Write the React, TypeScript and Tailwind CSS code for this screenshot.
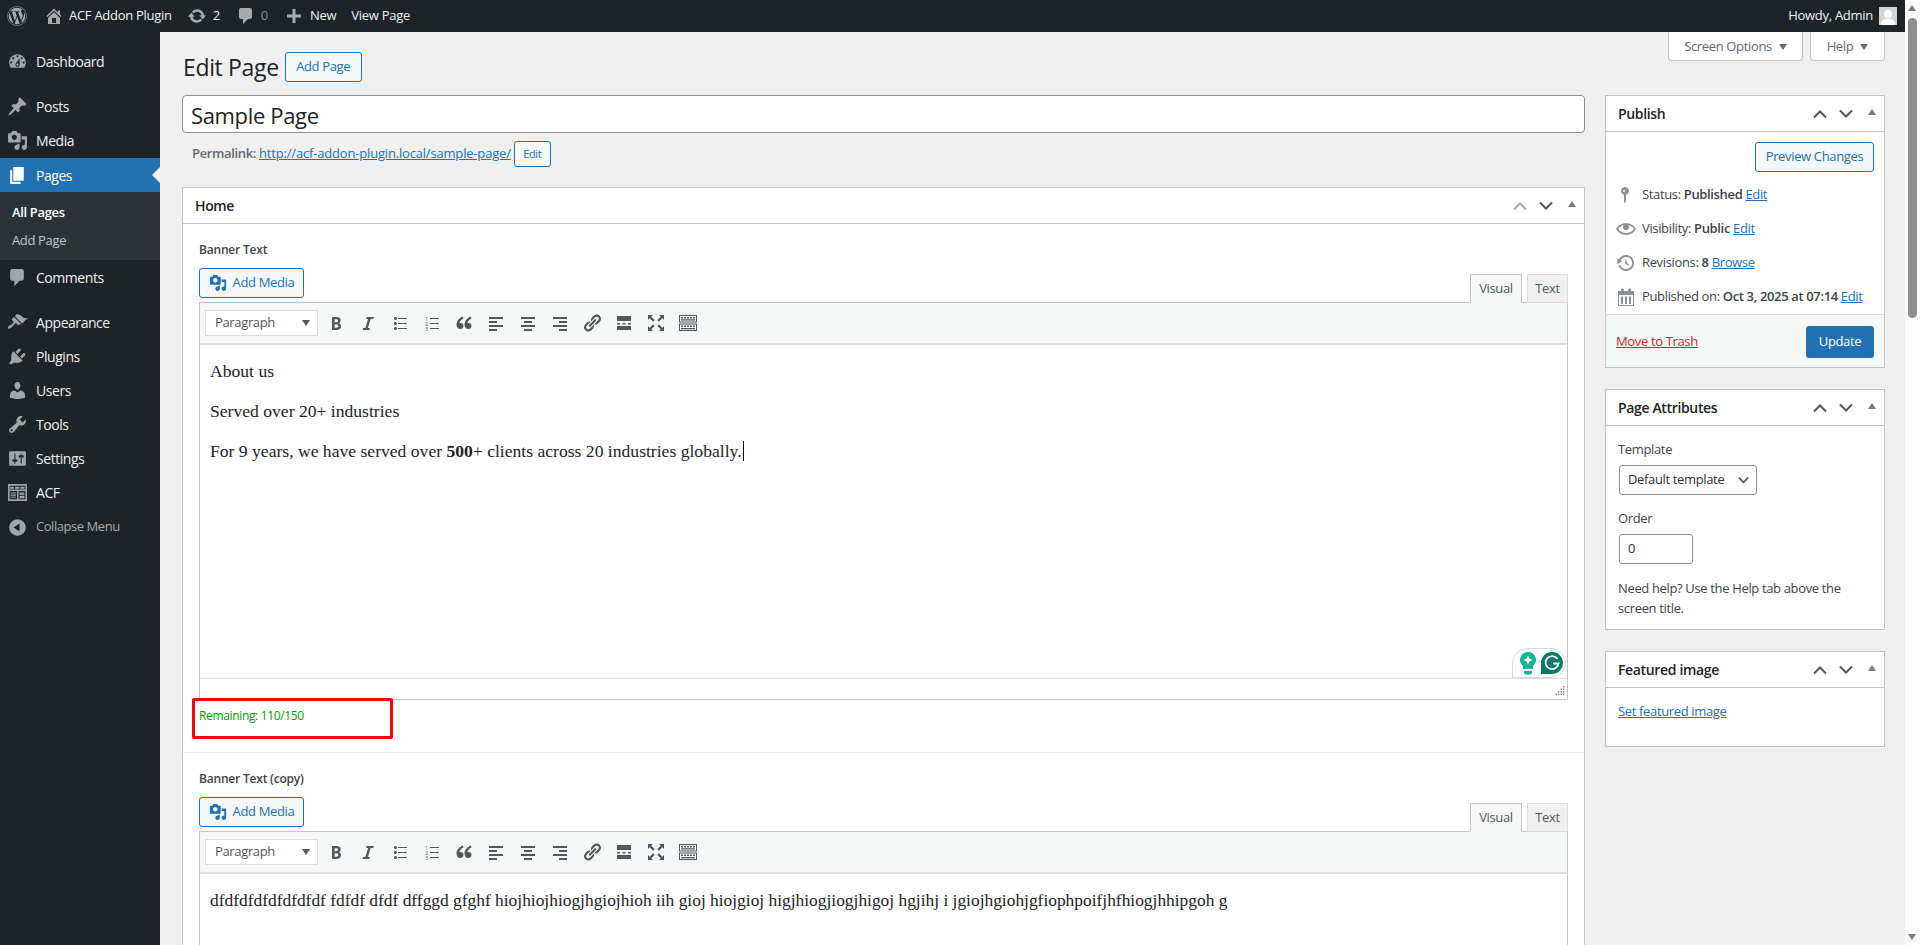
import React from "react";
import { FaWordpress } from "react-icons/fa";

const P = {
  update: "M10.2 3.28c3.53 0 6.43 2.61 6.92 6h2.08l-3.5 4-3.5-4h2.32c-.45-1.97-2.21-3.45-4.32-3.45-1.45 0-2.73.71-3.54 1.78L4.95 5.66C6.23 4.2 8.11 3.28 10.2 3.28zm-.4 13.44c-3.52 0-6.43-2.61-6.92-6H.8l3.5-4c1.17 1.33 2.33 2.67 3.5 4H5.48c.45 1.97 2.21 3.45 4.32 3.45 1.45 0 2.73-.71 3.54-1.78l1.71 1.95c-1.28 1.46-3.15 2.38-5.25 2.38z",
  home: "M16 8.5l1.53 1.53-1.06 1.06L10 4.62l-6.47 6.47-1.06-1.06L10 2.5l4 4v-2h2v4zm-6-2.46l6 5.99V18H4v-5.97zM12 17v-5H8v5h4z",
  dashboard: "M3.76 16h12.48c1.1-1.37 1.76-3.11 1.76-5 0-4.42-3.58-8-8-8s-8 3.58-8 8c0 1.89.66 3.63 1.76 5zM10 4c.55 0 1 .45 1 1s-.45 1-1 1-1-.45-1-1 .45-1 1-1zM6 6c.55 0 1 .45 1 1s-.45 1-1 1-1-.45-1-1 .45-1 1-1zm8 0c.55 0 1 .45 1 1s-.45 1-1 1-1-.45-1-1 .45-1 1-1zm-5.37 5.55L12 7v6c0 1.1-.9 2-2 2s-2-.9-2-2c0-.57.24-1.08.63-1.45zM4 10c.55 0 1 .45 1 1s-.45 1-1 1-1-.45-1-1 .45-1 1-1zm12 0c.55 0 1 .45 1 1s-.45 1-1 1-1-.45-1-1 .45-1 1-1zm-5 3c0-.55-.45-1-1-1s-1 .45-1 1 .45 1 1 1 1-.45 1-1z",
  post: "M10.44 3.02l1.82-1.82 6.36 6.35-1.83 1.82c-1.05-.68-2.48-.57-3.41.36l-.75.75c-.92.93-1.04 2.35-.35 3.41l-1.83 1.82-2.41-2.41-2.8 2.79c-.42.42-3.38 2.71-3.8 2.29s1.86-3.39 2.28-3.81l2.79-2.79L4.1 9.36l1.83-1.82c1.05.69 2.48.57 3.4-.36l.75-.75c.93-.92 1.05-2.35.36-3.41z",
  media: "M13 11V4c0-.55-.45-1-1-1h-1.67L9 1H5L3.67 3H2c-.55 0-1 .45-1 1v7c0 .55.45 1 1 1h10c.55 0 1-.45 1-1zM7 4.5c1.38 0 2.5 1.12 2.5 2.5S8.38 9.5 7 9.5 4.5 8.38 4.5 7 5.62 4.5 7 4.5zM14 6h5v10.5c0 1.38-1.12 2.5-2.5 2.5S14 17.88 14 16.5s1.12-2.5 2.5-2.5c.17 0 .34.02.5.05V9h-3V6zm-4 8.05V13h2v3.5c0 1.38-1.12 2.5-2.5 2.5S7 17.88 7 16.5 8.12 14 9.5 14c.17 0 .34.02.5.05z",
  page: "M6 15V2h10v13H6zm-1 1h8v2H3V5h2v11z",
  comment: "M5 2h9c1.1 0 2 .9 2 2v7c0 1.1-.9 2-2 2h-2l-5 5v-5H5c-1.1 0-2-.9-2-2V4c0-1.1.9-2 2-2z",
  appearance: "M14.48 11.06L7.41 3.99l1.5-1.5c.5-.56 2.3-.47 3.51.32 1.21.8 1.43 1.28 2.91 2.1 1.18.64 2.45 1.26 4.45.85zm-.71.71L6.7 4.7 4.93 6.47c-.39.39-.39 1.02 0 1.41l1.06 1.06c.39.39.39 1.03 0 1.42-.6.6-1.43 1.11-2.21 1.69-.35.26-.7.53-1.01.84C1.43 13.23.4 14.91 1.2 15.7c.79.8 2.48-.23 3.82-1.57.31-.31.58-.66.84-1.01.58-.78 1.09-1.61 1.69-2.21.39-.39 1.02-.39 1.41 0l1.06 1.06c.39.39 1.02.39 1.41 0z",
  plugin: "M13.11 4.36L9.87 7.6 8 5.73l3.24-3.24c.35-.34 1.05-.2 1.56.32.52.51.66 1.21.31 1.55zm-8 1.77l.91-1.12 9.01 9.01-1.19.84c-.71.71-2.63 1.16-3.82 1.16H6.14L4.9 17.26c-.59.59-1.54.59-2.12 0-.59-.58-.59-1.53 0-2.12l1.24-1.24v-3.88c0-1.13.4-3.19 1.09-3.89zm7.26 3.97l3.24-3.24c.34-.35 1.04-.21 1.55.31.52.51.66 1.21.31 1.55l-3.24 3.25z",
  users: "M10 9.25c-2.27 0-2.73-3.44-2.73-3.44C7 4.02 7.82 2 9.97 2c2.16 0 2.98 2.02 2.71 3.81 0 0-.41 3.44-2.68 3.44zm0 2.57L12.72 10c2.39 0 4.52 2.33 4.52 4.53v2.49s-3.65 1.13-7.24 1.13c-3.65 0-7.24-1.13-7.24-1.13v-2.49c0-2.25 1.94-4.48 4.47-4.48z",
  tools: "M16.68 9.77c-1.34 1.34-3.3 1.67-4.95.99l-5.41 6.52c-.99.99-2.59.99-3.58 0s-.99-2.59 0-3.57l6.52-5.42c-.68-1.65-.35-3.61.99-4.95 1.28-1.28 3.12-1.62 4.72-1.06l-2.89 2.89 2.82 2.82 2.86-2.87c.53 1.58.18 3.39-1.08 4.65zM3.81 16.21c.4.39 1.04.39 1.43 0 .4-.4.4-1.04 0-1.43-.39-.4-1.03-.4-1.43 0-.39.39-.39 1.03 0 1.43z",
  settings: "M18 16V4c0-.55-.45-1-1-1H3c-.55 0-1 .45-1 1v12c0 .55.45 1 1 1h14c.55 0 1-.45 1-1zM8 11h1c.55 0 1 .45 1 1s-.45 1-1 1H8v1.5c0 .28-.22.5-.5.5s-.5-.22-.5-.5V13H6c-.55 0-1-.45-1-1s.45-1 1-1h1V5.5c0-.28.22-.5.5-.5s.5.22.5.5V11zm5-2h-1c-.55 0-1-.45-1-1s.45-1 1-1h1V5.5c0-.28.22-.5.5-.5s.5.22.5.5V7h1c.55 0 1 .45 1 1s-.45 1-1 1h-1v5.5c0 .28-.22.5-.5.5s-.5-.22-.5-.5V9z",
  acf: "M1 2h18v16H1zM2.5 3.5v3.7h15V3.5zM3 4.5h3.5v2H3zm4.7 0h4v2h-4zm5 0h4v2h-4zM2.5 8.5v8h7v-8zm8.5 0v8h6.5v-8zM3.5 10h5v1h-5zm0 2h5v1h-5zm0 2h5v1h-5zM12 10h4.5v2.2H12zm0 3.2h4.5v2.3H12z",
  collapse: "M10 2.16c4.33 0 7.84 3.51 7.84 7.84s-3.51 7.84-7.84 7.84S2.16 14.33 2.16 10 5.71 2.16 10 2.16zm2 11.72V6.12L6.18 9.97z",
  pin: "M14 6c0 1.86-1.28 3.41-3 3.86V16c0 1-2 2-2 2V9.86C7.28 9.41 6 7.86 6 6c0-2.21 1.79-4 4-4s4 1.79 4 4zM8 6c0 .5.5 1 1 1s1-.5 1-1-.5-1-1-1-1 .5-1 1z",
  eye: "M19.7 9.4C17.7 6 14 3.9 10 3.9S2.3 6 .3 9.4L0 10l.3.6c2 3.4 5.7 5.5 9.7 5.5s7.7-2.1 9.7-5.5l.3-.6-.3-.6zM10 14.1c-3.1 0-6-1.6-7.7-4.1C3.6 8 5.7 6.6 8 6.1 7.3 6.7 7 7.4 7 8.2c0 1.7 1.3 3 3 3s3-1.3 3-3c0-.8-.3-1.5-.8-2.1 2.3.5 4.4 1.9 5.7 3.9-1.7 2.5-4.6 4.1-7.9 4.1z",
  backup: "M13.65 2.88c3.93 2.01 5.48 6.84 3.47 10.77s-6.83 5.48-10.77 3.47c-1.87-.96-3.2-2.56-3.86-4.4l1.64-1.03c.45 1.57 1.52 2.95 3.08 3.76 3.01 1.54 6.69.35 8.23-2.66 1.55-3.01.36-6.69-2.65-8.24C9.78 3.01 6.1 4.2 4.56 7.21l1.88.97-4.95 3.08-.39-5.82 1.78.91C4.9 2.4 9.75.89 13.65 2.88zm-4.36 7.83C9.11 10.53 9 10.28 9 10c0-.07.03-.12.04-.19h-.01L10 5l.97 4.81L14 13l-4.5-2.12.02-.02c-.08-.04-.16-.09-.23-.15z",
  calendar: "M15 4h3v15H2V4h3V3c0-.41.15-.76.44-1.06.29-.29.65-.44 1.06-.44s.77.15 1.06.44c.29.3.44.65.44 1.06v1h4V3c0-.41.15-.76.44-1.06.29-.29.65-.44 1.06-.44s.77.15 1.06.44c.29.3.44.65.44 1.06v1zM3 8v10h14V8zM5 9.5h2V17H5zm4 0h2V17H9zm4 0h2V17h-2z",
  bold: "M6 4v13h4.54c1.37 0 2.46-.33 3.26-1 .8-.66 1.2-1.58 1.2-2.77 0-.84-.17-1.51-.51-2.01s-.9-.85-1.69-1.04v-.06c.57-.1 1.02-.4 1.36-.9s.51-1.13.51-1.88c0-1.14-.39-1.98-1.17-2.5C12.72 4.26 11.5 4 9.84 4H6zm2.57 5.15V6.26h1.36c.73 0 1.27.11 1.61.32.34.22.51.58.51 1.07 0 .54-.16.92-.47 1.15s-.82.35-1.51.35h-1.5zm0 2.19h1.6c1.44 0 2.16.53 2.16 1.61 0 .6-.17 1.05-.51 1.34s-.86.44-1.57.44H8.57v-3.39z",
  italic: "M14.78 6h-2.13l-2.8 9h2.12l-.62 2H4.6l.62-2h2.14l2.8-9H8.03l.62-2h7.75z",
  ul: "M5.5 7C4.67 7 4 6.33 4 5.5 4 4.68 4.67 4 5.5 4 6.32 4 7 4.68 7 5.5 7 6.33 6.32 7 5.5 7zM8 5h9v1H8V5zm-2.5 7c-.83 0-1.5-.67-1.5-1.5C4 9.68 4.67 9 5.5 9c.82 0 1.5.68 1.5 1.5 0 .83-.68 1.5-1.5 1.5zM8 10h9v1H8v-1zm-2.5 7c-.83 0-1.5-.67-1.5-1.5 0-.82.67-1.5 1.5-1.5.82 0 1.5.68 1.5 1.5 0 .83-.68 1.5-1.5 1.5zM8 15h9v1H8v-1z",
  quote: "M9.5 13c0-1.7-1.3-3-3-3-.5 0-.9.1-1.1.2.4-2.3 2.6-4.2 4.3-5L8.6 3.6C5.8 4.9 2.5 7.7 2.5 11.7c0 2.6 1.6 4.3 3.7 4.3 1.9 0 3.3-1.3 3.3-3zm8 0c0-1.7-1.3-3-3-3-.5 0-.9.1-1.1.2.4-2.3 2.6-4.2 4.3-5l-1.1-1.6c-2.8 1.3-6.1 4.1-6.1 8.1 0 2.6 1.6 4.3 3.7 4.3 1.9 0 3.3-1.3 3.3-3z",
  alignLeft: "M3 4h14v2H3zM3 8h8v2H3zM3 12h14v2H3zM3 16h8v2H3z",
  alignCenter: "M3 4h14v2H3zM6 8h8v2H6zM3 12h14v2H3zM6 16h8v2H6z",
  alignRight: "M3 4h14v2H3zM9 8h8v2H9zM3 12h14v2H3zM9 16h8v2H9z",
  link: "M17.74 2.76c1.68 1.69 1.68 4.41 0 6.1l-1.53 1.52c-1.12 1.12-2.7 1.47-4.14 1.09l2.62-2.61.76-.77.76-.76c.84-.84.84-2.2 0-3.04-.84-.85-2.2-.85-3.04 0l-.77.76-3.38 3.38c-.37-1.44-.02-3.02 1.1-4.14l1.52-1.53c1.69-1.68 4.42-1.68 6.1 0zM8.59 13.43l5.34-5.34c.42-.42.42-1.1 0-1.52-.44-.43-1.13-.39-1.53 0l-5.33 5.34c-.42.42-.42 1.1 0 1.52.44.43 1.13.39 1.52 0zm-.76 2.29l4.14-4.15c.38 1.44.03 3.02-1.09 4.14l-1.52 1.53c-1.69 1.68-4.41 1.68-6.1 0-1.68-1.68-1.68-4.42 0-6.1l1.53-1.52c1.12-1.12 2.7-1.47 4.14-1.1l-4.14 4.15c-.85.84-.85 2.2 0 3.05.84.84 2.2.84 3.04 0z",
  more: "M3 3h14v5H3zM3 10h3v1.5H3zM8.5 10h3v1.5h-3zM14 10h3v1.5h-3zM3 13h14v4H3z",
  full: "M2 2h5L5.3 3.7l3.4 3.4-1.6 1.6-3.4-3.4L2 7zM18 2v5l-1.7-1.7-3.4 3.4-1.6-1.6 3.4-3.4L13 2zM2 18v-5l1.7 1.7 3.4-3.4 1.6 1.6-3.4 3.4L7 18zM18 18h-5l1.7-1.7-3.4-3.4 1.6-1.6 3.4 3.4L18 13z",
  sink: "M1 2h18v7.500H1zM2 3v5.500h16V3zM3 4h2v1.500H3zm3 0h2v1.500H6zm3 0h2v1.500H9zm3 0h2v1.500h-2zm3 0h2v1.500h-2zM3 6.300h14v1.200H3zM1 10.500h18V18H1zM2 11.500V17h16v-5.500zM3 12.500h2V14H3zm3 0h2V14H6zm3 0h2V14H9zm3 0h2V14h-2zm3 0h2V14h-2zM3 15h14v1.200H3z",
};

function Ico({ d, className }: { d: string; className: string }) {
  return (
    <svg viewBox="0 0 20 20" fill="currentColor" fillRule="evenodd" className={className}>
      <path d={d} />
    </svg>
  );
}

function MenuItem({ icon, label, active, className = "", dim }: { icon: string; label: string; active?: boolean; className?: string; dim?: boolean }) {
  return (
    <div className={`relative flex h-[34px] items-center tracking-[-0.45px] ${dim ? "text-[13px] text-[#a7aaad]" : active ? "bg-[#2271b1] text-[14px] text-white" : "text-[14px] text-[#f0f0f1]"} ${className}`}>
      <Ico d={icon} className={`ml-[7px] h-[21px] w-[21px] shrink-0 ${active ? "text-white" : "text-[#a0a5aa]"}`} />
      <span className="ml-[8px]">{label}</span>
      {active && <span className="absolute right-0 top-[9px] border-y-[8px] border-r-[8px] border-y-transparent border-r-[#f0f0f1]" />}
    </div>
  );
}

function Sidebar() {
  return (
    <aside className="h-[913px] w-[160px] shrink-0 bg-[#1d2327] pt-[12px]">
      <MenuItem icon={P.dashboard} label="Dashboard" />
      <MenuItem icon={P.post} label="Posts" className="mt-[11px]" />
      <MenuItem icon={P.media} label="Media" />
      <MenuItem icon={P.page} label="Pages" active className="mt-px" />
      <div className="h-[68px] bg-[#2c3338] pt-[7px] text-[13px]">
        <div className="flex h-[27px] items-center pl-[12px] font-semibold text-white">All Pages</div>
        <div className="mt-px flex h-[27px] items-center pl-[12px] text-[#c3c4c7]">Add Page</div>
      </div>
      <MenuItem icon={P.comment} label="Comments" />
      <MenuItem icon={P.appearance} label="Appearance" className="mt-[11px]" />
      <MenuItem icon={P.plugin} label="Plugins" />
      <MenuItem icon={P.users} label="Users" />
      <MenuItem icon={P.tools} label="Tools" />
      <MenuItem icon={P.settings} label="Settings" />
      <MenuItem icon={P.acf} label="ACF" />
      <MenuItem icon={P.collapse} label="Collapse Menu" dim className="mt-px" />
    </aside>
  );
}

function AdminBar() {
  return (
    <header className="flex h-[32px] items-center bg-[#1d2327] text-[13px] tracking-[-0.28px] text-[#f0f0f1]">
      <FaWordpress className="ml-[7px] h-[20px] w-[20px] text-[#a7aaad]" />
      <Ico d={P.home} className="ml-[17px] h-[20px] w-[20px] text-[#a7aaad]" />
      <span className="ml-[5px]">ACF Addon Plugin</span>
      <Ico d={P.update} className="ml-[15px] h-[20px] w-[20px] text-[#a7aaad]" />
      <span className="ml-[6px]">2</span>
      <Ico d={P.comment} className="ml-[16px] h-[20px] w-[20px] text-[#a7aaad]" />
      <span className="ml-[5px] text-[#8c8f94]">0</span>
      <svg viewBox="0 0 20 20" className="ml-[16px] h-[20px] w-[20px] text-[#a7aaad]" fill="currentColor"><path d="M8.5 3h3v5.5H17v3h-5.5V17h-3v-5.5H3v-3h5.5z" /></svg>
      <span className="ml-[6px]">New</span>
      <span className="ml-[15px]">View Page</span>
      <span className="ml-auto">Howdy, Admin</span>
      <span className="ml-[6px] mr-[8px] flex h-[18px] w-[18px] items-end justify-center overflow-hidden bg-[#d4d4d4]">
        <svg viewBox="0 0 18 18" className="h-[18px] w-[18px]" fill="#fff"><circle cx="9" cy="7" r="4" /><path d="M2 18c0-5 3-6.5 7-6.5s7 1.5 7 6.5z" /></svg>
      </span>
    </header>
  );
}

function Handles({ dimUp }: { dimUp?: boolean }) {
  return (
    <div className="flex items-center">
      <svg viewBox="0 0 16 10" className={`h-[10px] w-[16px] ${dimUp ? "text-[#a7aaad]" : "text-[#50575e]"}`} fill="none" stroke="currentColor" strokeWidth="2"><path d="M2 8.5l6-6 6 6" /></svg>
      <svg viewBox="0 0 16 10" className="ml-[10px] h-[10px] w-[16px] text-[#50575e]" fill="none" stroke="currentColor" strokeWidth="2"><path d="M2 1.5l6 6 6-6" /></svg>
      <span className="ml-[14px] mb-[3px] border-x-[4px] border-b-[6px] border-x-transparent border-b-[#787c82]" />
    </div>
  );
}

function SideBox({ title, children, className = "" }: { title: string; children: React.ReactNode; className?: string }) {
  return (
    <section className={`border border-[#c3c4c7] bg-white ${className}`}>
      <div className="flex h-[36px] items-center justify-between border-b border-[#c3c4c7] pl-[12px] pr-[8px]">
        <h2 className="text-[14px] font-semibold text-[#1d2327]">{title}</h2>
        <Handles />
      </div>
      {children}
    </section>
  );
}

function Btn({ children, className = "" }: { children: React.ReactNode; className?: string }) {
  return <span className={`inline-flex items-center justify-center rounded-[3px] border border-[#2271b1] bg-[#f6f7f7] text-[#2271b1] ${className}`}>{children}</span>;
}

function Toolbar() {
  const icons = [P.bold, P.italic, P.ul, "ol", P.quote, P.alignLeft, P.alignCenter, P.alignRight, P.link, P.more, P.full, P.sink];
  return (
    <div className="flex h-[42px] items-center border-b-2 border-[#dcdcde] bg-[#f6f7f7] pl-[5px]">
      <div className="flex h-[26px] w-[113px] items-center justify-between border border-[#dcdcde] bg-white pl-[9px] pr-[7px] text-[13px] text-[#50575e]">
        Paragraph
        <span className="border-x-[4px] border-t-[6px] border-x-transparent border-t-[#50575e]" />
      </div>
      <div className="ml-[2px] flex">
        {icons.map((d, i) => (
          <span key={i} className="flex h-[26px] w-[32px] items-center justify-center text-[#50575e]">
            {d === "ol" ? (
              <svg viewBox="0 0 20 20" className="h-[20px] w-[20px]" fill="currentColor">
                <path d="M8 5h9v1H8zM8 10h9v1H8zM8 15h9v1H8z" />
                <text x="3" y="7.5" fontSize="5.5">1</text>
                <text x="3" y="12.5" fontSize="5.5">2</text>
                <text x="3" y="17.5" fontSize="5.5">3</text>
              </svg>
            ) : (
              <Ico d={d} className="h-[20px] w-[20px]" />
            )}
          </span>
        ))}
      </div>
    </div>
  );
}

function EditorHead() {
  return (
    <div className="flex h-[34px] items-start justify-between">
      <Btn className="h-[30px] w-[105px] text-[13px]">
        <Ico d={P.media} className="mr-[6px] h-[18px] w-[18px]" />
        Add Media
      </Btn>
      <div className="relative z-10 flex items-end self-end pt-[6px] text-[13px] text-[#50575e]">
        <span className="-mb-px flex h-[29px] w-[52px] items-center justify-center border border-[#c3c4c7] border-b-[#f6f7f7] bg-[#f6f7f7]">Visual</span>
        <span className="-mb-px ml-[5px] flex h-[29px] w-[41px] items-center justify-center border border-[#dcdcde] bg-[#f0f0f1]">Text</span>
      </div>
    </div>
  );
}

function Grammarly() {
  return (
    <div className="absolute bottom-0 right-[1px] flex h-[30px] w-[54px] items-center justify-end gap-[4px] rounded-t-[16px] rounded-br-[16px] border border-[#d5d8e5] bg-white pr-[2px]">
      <svg viewBox="0 0 18 24" className="h-[24px] w-[18px]">
        <path d="M9 1a8 8 0 00-5 14.2V18h10v-2.8A8 8 0 009 1z" fill="#12b594" />
        <path d="M5 20h8v1.5a2 2 0 01-2 2H7a2 2 0 01-2-2z" fill="#12b594" />
        <path d="M9 4.5l1.4 3.1L13.5 9l-3.1 1.4L9 13.500l-1.400-3.100L4.500 9l3.100-1.400z" fill="#fff" />
      </svg>
      <svg viewBox="0 0 22 22" className="h-[22px] w-[22px]">
        <path d="M11 0a11 11 0 010 22H0V11A11 11 0 0111 0z" fill="#0b7a66" />
        <path d="M16.500 7A6.500 6.500 0 1017.500 11.500H12" fill="none" stroke="#fff" strokeWidth="1.800" />
      </svg>
    </div>
  );
}

function Publish() {
  const rowCls = "flex h-[34px] items-center text-[13px] text-[#3c434a]";
  const ic = "h-[20px] w-[20px] text-[#8c8f94]";
  const a = "text-[#2271b1] underline";
  return (
    <SideBox title="Publish">
      <div className="flex justify-end px-[10px] pt-[10px]">
        <Btn className="h-[30px] w-[119px] text-[13px]">Preview Changes</Btn>
      </div>
      <div className="mt-[6px] pl-[10px]">
        <div className={rowCls}><Ico d={P.pin} className={`${ic} ml-[-1px]`} /><span className="ml-[7px]">Status: <b className="font-semibold">Published</b> <span className={a}>Edit</span></span></div>
        <div className={rowCls}><Ico d={P.eye} className={ic} /><span className="ml-[6px]">Visibility: <b className="font-semibold">Public</b> <span className={a}>Edit</span></span></div>
        <div className={rowCls}><Ico d={P.backup} className={ic} /><span className="ml-[6px]">Revisions: <b className="font-semibold">8</b> <span className={a}>Browse</span></span></div>
        <div className={rowCls}><Ico d={P.calendar} className={ic} /><span className="ml-[6px]">Published on: <b className="font-semibold">Oct 3, 2025 at 07:14</b> <span className={a}>Edit</span></span></div>
      </div>
      <div className="flex h-[53px] items-center justify-between border-t border-[#dcdcde] bg-[#f6f7f7] px-[10px] pt-[2px]">
        <span className="text-[13px] text-[#b32d2e] underline">Move to Trash</span>
        <span className="flex h-[32px] w-[68px] items-center justify-center rounded-[3px] bg-[#2271b1] text-[13px] text-white">Update</span>
      </div>
    </SideBox>
  );
}

export default function App() {
  const firstText = "dfdfdfdfdfdfdfdf fdfdf dfdf dffggd gfghf hiojhiojhiogjhgiojhioh iih gioj hiojgioj higjhiogjiogjhigoj hgjihj i jgiojhgiohjgfiophpoifjhfhiogjhhipgoh g";
  return (
    <div className="flex h-[945px] w-[1920px] overflow-hidden bg-[#f0f0f1] font-['Open_Sans',sans-serif] tracking-[-0.35px] text-[#3c434a]">
      <div className="flex w-[1905px] flex-col">
        <AdminBar />
        <div className="flex min-h-0 flex-1">
          <Sidebar />
          <main className="min-w-0 flex-1 pl-[22px] pr-[20px]">
            <div className="flex h-[29px] justify-end gap-[7px] text-[13px] text-[#646970]">
              <div className="flex h-[29px] w-[135px] items-center justify-center gap-[7px] rounded-b-[4px] border border-t-0 border-[#c3c4c7] bg-white pt-[2px]">
                Screen Options
                <span className="border-x-[4px] border-t-[6px] border-x-transparent border-t-[#646970]" />
              </div>
              <div className="flex h-[29px] w-[75px] items-center justify-center gap-[7px] rounded-b-[4px] border border-t-0 border-[#c3c4c7] bg-white pt-[2px]">
                Help
                <span className="border-x-[4px] border-t-[6px] border-x-transparent border-t-[#646970]" />
              </div>
            </div>
            <div className="-mt-[9px] flex h-[30px] items-center">
              <h1 className="ml-px text-[23px] text-[#1d2327]">Edit Page</h1>
              <Btn className="ml-[6px] h-[30px] w-[77px] text-[13px]">Add Page</Btn>
            </div>
            <div className="mt-[13px] flex items-start gap-[20px]">
              <div className="w-[1403px] shrink-0">
                <div className="flex h-[38px] items-center rounded-[4px] border border-[#8c8f94] bg-white pl-[8px] pt-[2px] text-[22px] text-[#1d2327]">Sample Page</div>
                <div className="mt-[8px] flex h-[26px] items-center pl-[10px] text-[13px] text-[#646970]">
                  <b className="font-semibold">Permalink:</b>
                  <span className="ml-[3px] tracking-[-0.18px] text-[#2271b1] underline">http://acf-addon-plugin.local/sample-page/</span>
                  <Btn className="ml-[3px] h-[26px] w-[37px] text-[11px]">Edit</Btn>
                </div>
                <section className="mt-[20px] border border-[#c3c4c7] bg-white">
                  <div className="flex h-[36px] items-center justify-between border-b border-[#c3c4c7] pl-[12px] pr-[8px]">
                    <h2 className="text-[14px] font-semibold text-[#1d2327]">Home</h2>
                    <Handles dimUp />
                  </div>
                  <div className="border-b border-[#f0f0f1] px-[16px] pb-[16px] pt-[17px]">
                    <div className="h-[18px] text-[12px] font-semibold leading-[18px] tracking-[-0.2px] text-[#3c434a]">Banner Text</div>
                    <div className="h-[9px]" />
                    <EditorHead />
                    <div className="border border-[#c3c4c7]">
                      <Toolbar />
                      <div className="relative h-[333px] font-['Liberation_Serif',serif] text-[17.6px] leading-[24px] tracking-normal text-[#1d2327]">
                        <div className="px-[10px] pt-[14px]">
                          <p>About us</p>
                          <p className="mt-[16px]">Served over 20+ industries</p>
                          <p className="mt-[16px]">For 9 years, we have served over <b>500</b>+ clients across 20 industries globally.<span className="ml-px inline-block h-[20px] w-px bg-black align-[-4px]" /></p>
                        </div>
                        <Grammarly />
                      </div>
                      <div className="relative h-[21px] border-t border-[#dcdcde]">
                        <svg viewBox="0 0 10 10" className="absolute bottom-[3px] right-[2px] h-[10px] w-[10px]" fill="#8c8f94">
                          <path d="M8 0h1.500v1.500H8zM8 2.500h1.500V4H8zM5.500 2.500H7V4H5.500zM8 5h1.500v1.500H8zM5.500 5H7v1.500H5.500zM3 5h1.500v1.500H3zM8 7.500h1.500V9H8zM5.500 7.500H7V9H5.500zM3 7.500h1.500V9H3zM.5 7.500H2V9H.5z" />
                        </svg>
                      </div>
                    </div>
                    <div className="relative mt-[8px] h-[28px] text-[12px] leading-[16px] text-[#00a000]">
                      Remaining: 110/150
                      <div className="absolute -left-[7px] -top-[10px] h-[41px] w-[201px] rounded-[2px] border-[3px] border-[#ff0000]" />
                    </div>
                  </div>
                  <div className="px-[16px] pb-[20px] pt-[17px]">
                    <div className="h-[18px] text-[12px] font-semibold leading-[18px] tracking-[-0.2px] text-[#3c434a]">Banner Text (copy)</div>
                    <div className="h-[9px]" />
                    <EditorHead />
                    <div className="border border-[#c3c4c7]">
                      <Toolbar />
                      <div className="h-[200px] px-[10px] pt-[14px] font-['Liberation_Serif',serif] text-[17.4px] leading-[24px] tracking-normal text-[#1d2327]">{firstText}</div>
                    </div>
                  </div>
                </section>
              </div>
              <div className="w-[280px] shrink-0">
                <Publish />
                <SideBox title="Page Attributes" className="mt-[21px]">
                  <div className="px-[12px] pt-[13px] text-[13px] text-[#3c434a]">
                    <div className="h-[20px] font-[500] leading-[20px]">Template</div>
                    <div className="ml-px mt-[6px] flex h-[30px] w-[138px] items-center justify-between rounded-[3px] border border-[#8c8f94] bg-white pl-[8px] pr-[7px] text-[#2c3338]">
                      Default template
                      <svg viewBox="0 0 12 8" className="h-[8px] w-[11px]" fill="none" stroke="#50575e" strokeWidth="1.800"><path d="M1 1.500l5 5 5-5" /></svg>
                    </div>
                    <div className="mt-[13px] h-[20px] font-[500] leading-[20px]">Order</div>
                    <div className="ml-px mt-[6px] flex h-[30px] w-[74px] items-center rounded-[3px] border border-[#8c8f94] bg-white pl-[8px] text-[#2c3338]">0</div>
                    <p className="mt-[14px] pb-[11px] leading-[20px]">Need help? Use the Help tab above the screen title.</p>
                  </div>
                </SideBox>
                <SideBox title="Featured image" className="mt-[21px]">
                  <div className="h-[58px] px-[12px] pt-[14px] text-[13px] text-[#2271b1] underline">Set featured image</div>
                </SideBox>
              </div>
            </div>
          </main>
        </div>
      </div>
      <div className="relative w-[15px] shrink-0 bg-[#fbfbfb]">
        <span className="absolute left-[3px] top-[5px] border-x-[4.500px] border-b-[6px] border-x-transparent border-b-[#7a7a7a]" />
        <div className="absolute left-[3px] top-[18px] h-[300px] w-[9px] rounded-full bg-[#8f8f8f]" />
        <span className="absolute bottom-[5px] left-[3px] border-x-[4.500px] border-t-[6px] border-x-transparent border-t-[#7a7a7a]" />
      </div>
    </div>
  );
}
